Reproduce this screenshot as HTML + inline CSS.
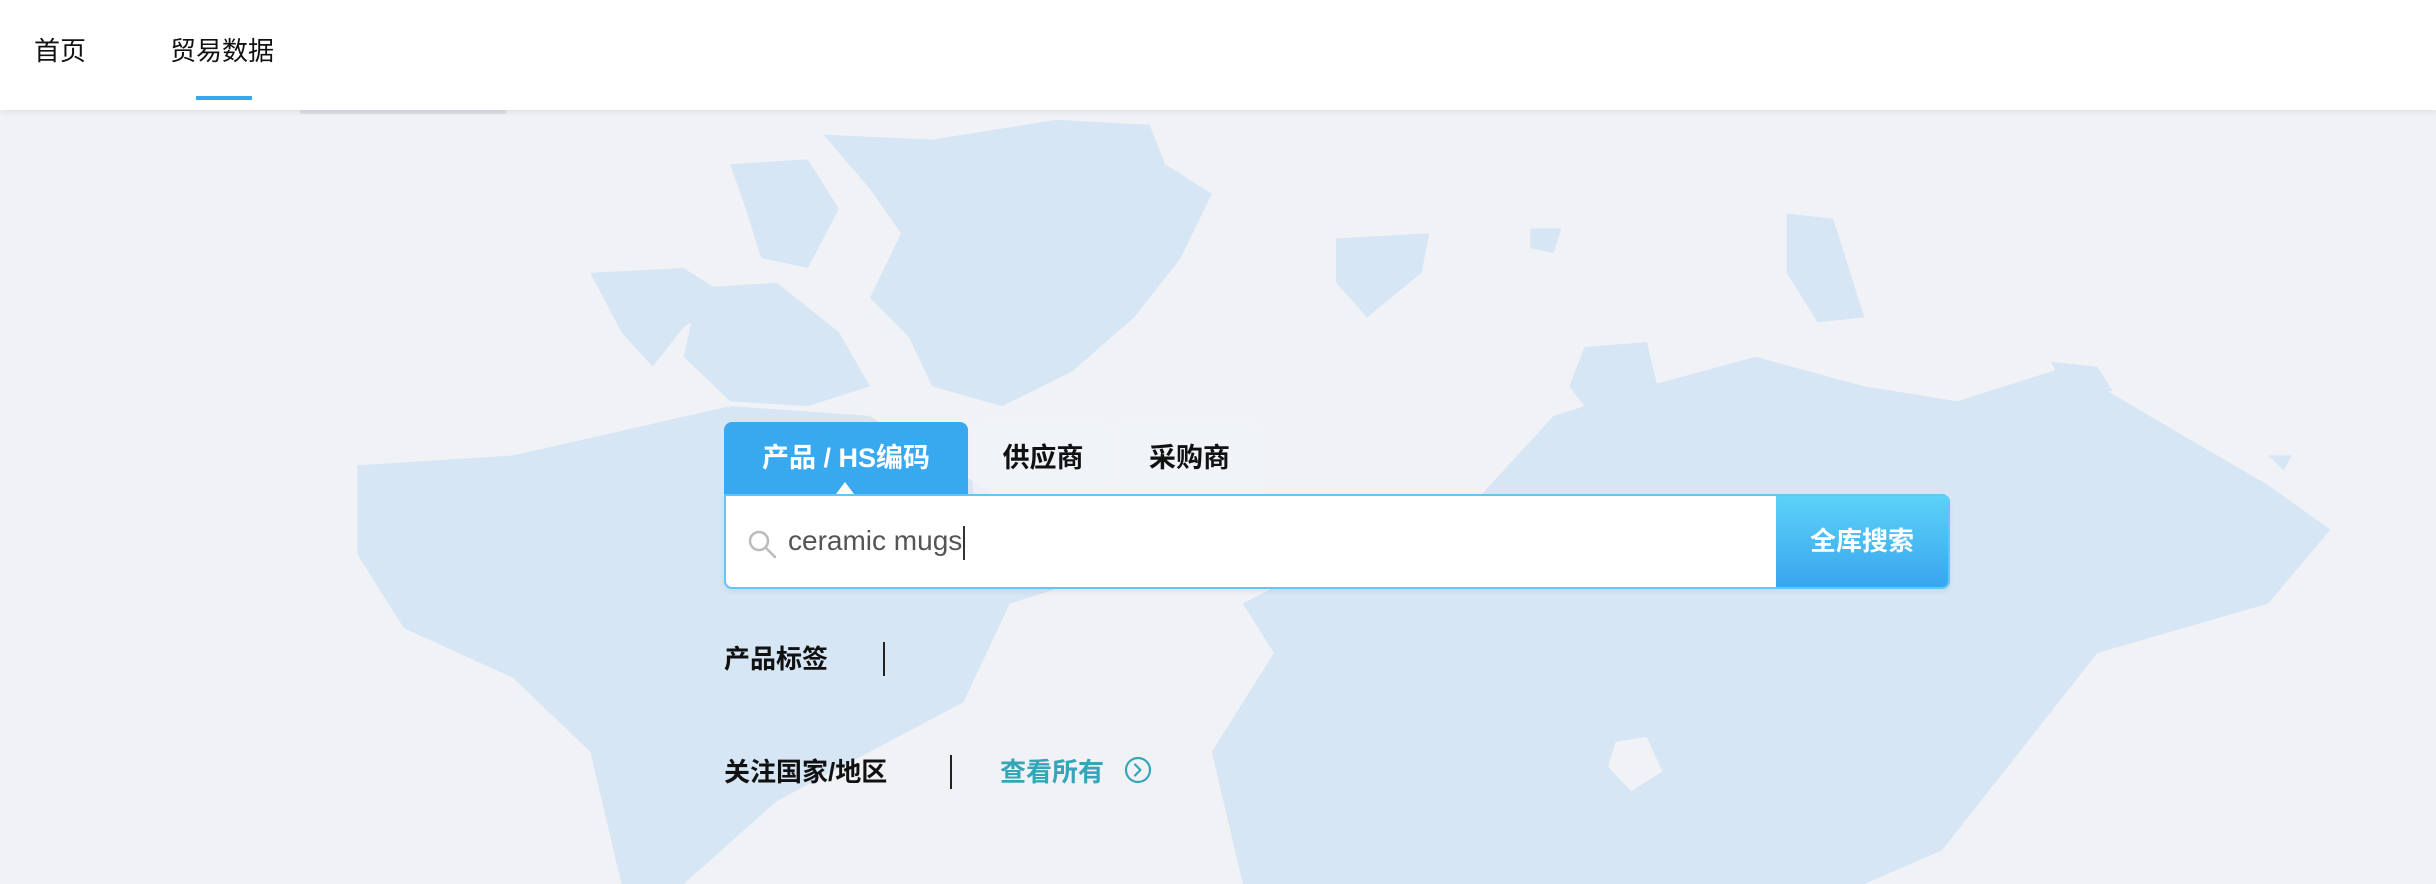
<!DOCTYPE html>
<html><head><meta charset="utf-8">
<style>
*{margin:0;padding:0;box-sizing:border-box}
body{width:2436px;height:884px;overflow:hidden;background:#f0f2f6;font-family:"Liberation Sans","Noto Sans CJK SC",sans-serif;position:relative}
#map{position:absolute;left:0;top:110px;width:2436px;height:774px}
.hdr{position:absolute;left:0;top:0;width:2436px;height:110px;background:#fff;box-shadow:0 2px 6px rgba(0,0,0,.08);z-index:3}
.nav{position:absolute;top:34px;font-size:26px;color:#111;line-height:34px}
.ul{position:absolute;left:196px;top:96px;width:56px;height:4px;background:#36a8ee}
.ghost{position:absolute;left:300px;top:110px;width:206px;height:4px;background:#dde0e6;z-index:2}
.tab{position:absolute;top:422px;height:72px;font-size:27px;font-weight:bold;line-height:72px;text-align:center;color:#111;background:rgba(240,243,248,.75);border-radius:8px 8px 0 0}
.tab.act{background:#38a9ef;color:#fff}
.tri{position:absolute;left:836px;top:482px;width:0;height:0;border-left:9px solid transparent;border-right:9px solid transparent;border-bottom:12px solid #fff;z-index:2}
.box{position:absolute;left:724px;top:494px;width:1226px;height:95px;border:2px solid #62c6f6;background:#fff;border-radius:0 8px 8px 8px;box-shadow:0 3px 6px rgba(0,0,0,.06);overflow:hidden}
.btn{position:absolute;right:0;top:0;width:172px;height:100%;background:linear-gradient(#5bd2f8,#3aa5ee);color:#fff;font-weight:bold;font-size:26px;text-align:center;line-height:91px}
.q{position:absolute;left:62px;top:26px;font-size:28px;color:#555;line-height:38px}
.caret{display:inline-block;width:2px;height:34px;background:#333;vertical-align:middle;margin-left:1px}
.lbl{position:absolute;font-size:26px;font-weight:bold;color:#111;line-height:34px}
.div{position:absolute;width:1.5px;height:34px;background:#222}
</style></head><body>
<svg id="map" viewBox="0 0 1568 1568" preserveAspectRatio="none" fill="#d6e6f5">
<path d="M530 50L600 60 680 20 740 30 750 110 780 170 760 300 730 420 690 530 645 600 600 560 585 460 560 380 580 250 560 160Z"/>
<path d="M470 110L520 100 540 200 520 320 490 300 480 200Z"/>
<path d="M380 330L440 320 470 380 440 440 420 520 400 450Z"/>
<path d="M450 360L500 350 540 450 560 560 520 600 470 590 440 500Z"/>
<path d="M230 720L330 700 400 650 470 600 560 620 600 700 640 780 700 860 690 960 650 1000 620 1200 560 1300 500 1400 440 1568 400 1568 380 1300 330 1150 260 1050 230 900Z"/>
<path d="M800 1000L860 900 930 860 1000 620 1060 560 1130 500 1200 560 1260 590 1330 520 1400 650 1460 760 1500 850 1460 1000 1350 1100 1300 1300 1250 1500 1200 1568 800 1568 780 1300 820 1100Z"/>
<path d="M840 1010L880 930 930 900 950 960 920 1080 880 1150 850 1100Z"/>
<path d="M860 260L920 250 915 330 880 420 860 350Z"/>
<path d="M1020 480L1060 470 1070 600 1030 640 1010 560Z"/>
<path d="M1150 210L1180 220 1200 420 1170 430 1150 330Z"/>
<path d="M985 240L1005 240 1000 290 985 280Z"/>
<path d="M700 880L760 870 770 940 720 960Z"/>
<path d="M1320 510L1350 520 1360 570 1330 570Z"/>
<path d="M1460 700L1475 700 1470 730Z"/>
<path fill="#f0f2f6" d="M1040 1280L1060 1270 1070 1340 1050 1380 1035 1330Z"/>
</svg>
<div class="hdr">
<div class="nav" style="left:34px">首页</div>
<div class="nav" style="left:170px">贸易数据</div>
<div class="ul"></div>
</div>
<div class="ghost"></div>
<div class="tab act" style="left:724px;width:244px">产品 / HS编码</div>
<div class="tab" style="left:973px;width:140px">供应商</div>
<div class="tab" style="left:1116px;width:147px">采购商</div>
<div class="tri"></div>
<div class="box">
<svg style="position:absolute;left:22px;top:34px" width="30" height="30" viewBox="0 0 30 30" fill="none" stroke="#bbb" stroke-width="2.5"><circle cx="11" cy="11" r="9"/><path d="M18 18L27 27" stroke-linecap="round"/></svg>
<div class="q">ceramic mugs<span class="caret"></span></div>
<div class="btn">全库搜索</div>
</div>
<div class="lbl" style="left:724px;top:642px">产品标签</div>
<div class="div" style="left:883px;top:642px"></div>
<div class="lbl" style="left:724px;top:755px">关注国家/地区</div>
<div class="div" style="left:950px;top:755px"></div>
<div class="lbl" style="left:1000px;top:755px;color:#35a6b8;font-weight:bold">查看所有</div>
<svg style="position:absolute;left:1124px;top:756px" width="28" height="28" viewBox="0 0 28 28" fill="none" stroke="#35a6b8" stroke-width="2.2"><circle cx="14" cy="14" r="12"/><path d="M11 8.5L16.5 14 11 19.5" stroke-linecap="round" stroke-linejoin="round"/></svg>
</body></html>
